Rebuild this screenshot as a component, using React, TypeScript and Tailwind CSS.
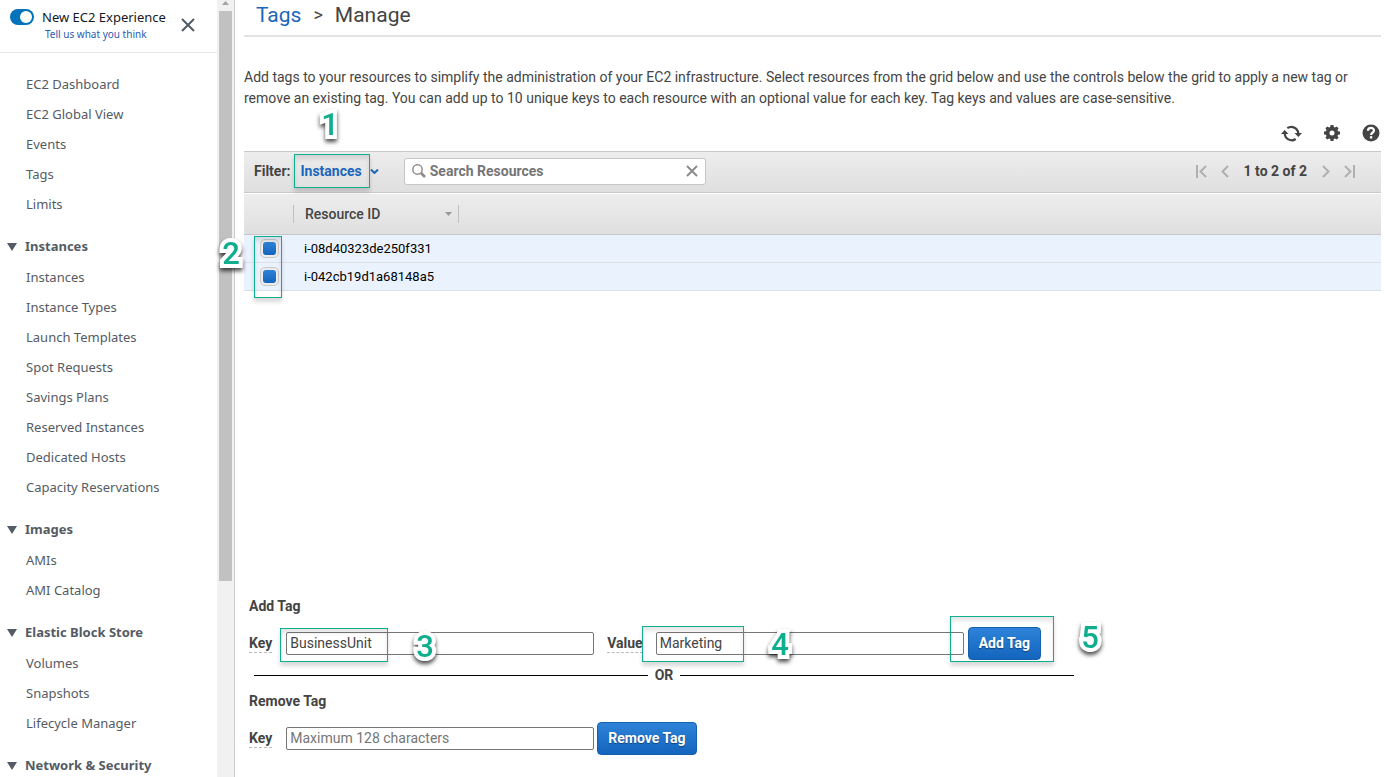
import React from "react";

type Section = { title: string; items: string[] };

const topLinks = ["EC2 Dashboard", "EC2 Global View", "Events", "Tags", "Limits"];

const sections: Section[] = [
  {
    title: "Instances",
    items: [
      "Instances",
      "Instance Types",
      "Launch Templates",
      "Spot Requests",
      "Savings Plans",
      "Reserved Instances",
      "Dedicated Hosts",
      "Capacity Reservations",
    ],
  },
  { title: "Images", items: ["AMIs", "AMI Catalog"] },
  { title: "Elastic Block Store", items: ["Volumes", "Snapshots", "Lifecycle Manager"] },
  { title: "Network & Security", items: [] },
];

const resources = ["i-08d40323de250f331", "i-042cb19d1a68148a5"];

function Frame({ className }: { className: string }) {
  return (
    <span
      aria-hidden="true"
      className={`pointer-events-none absolute z-10 border border-[#0fae8e] shadow-[0_4px_4px_rgba(0,0,0,0.15),inset_0_4px_4px_rgba(0,0,0,0.1)] ${className}`}
    />
  );
}

function Step({ n, className }: { n: number; className: string }) {
  return (
    <span
      className={`pointer-events-none absolute z-20 w-6 text-center text-[31px] leading-8 font-medium text-[#0fae8e] drop-shadow-[0_3px_2px_rgba(0,0,0,0.7)] [-webkit-text-stroke:8px_white] [paint-order:stroke_fill] [stroke-linejoin:round] ${className}`}
    >
      {n}
    </span>
  );
}

function NavLink({ label }: { label: string }) {
  return (
    <li className="flex h-[30px] items-center pl-[26px]">
      <a href="#" className="text-[#545b64]">
        {label}
      </a>
    </li>
  );
}

function Sidebar() {
  return (
    <aside className="flex w-[235px] shrink-0 border-r border-[#ccc] font-['Noto_Sans',sans-serif] text-[13px] text-[#545b64]">
      <div className="flex min-w-0 flex-1 flex-col">
        <div className="flex h-[53px] shrink-0 items-start border-b border-[#e3e8e8] pt-[8px] pl-[10px]">
          <label className="flex cursor-pointer items-start">
            <input type="checkbox" defaultChecked className="peer sr-only" aria-label="New EC2 Experience" />
            <span className="mt-[1px] flex h-4 w-6 justify-end rounded-full bg-[#0073bb] p-[2px]">
              <span className="size-3 rounded-full bg-white" />
            </span>
          </label>
          <div className="ml-2 flex w-[129px] flex-col whitespace-nowrap">
            <span className="text-[13px] leading-[18px] text-[#16191f]">New EC2 Experience</span>
            <a href="#" className="pl-[3px] text-[10px] leading-4 text-[#2a5db0]">
              Tell us what you think
            </a>
          </div>
          <button type="button" aria-label="Close" className="mt-[9px] ml-[9px]">
            <svg width="16" height="16" viewBox="0 0 16 16" stroke="#545b64" strokeWidth="2">
              <path d="M2 2 14 14M14 2 2 14" />
            </svg>
          </button>
        </div>
        <nav className="min-h-0 flex-1 overflow-hidden pt-4">
          <ul>
            {topLinks.map((l) => (
              <NavLink key={l} label={l} />
            ))}
          </ul>
          {sections.map((s) => (
            <section key={s.title}>
              <h2 className="mt-3 flex h-[31px] items-center gap-2 pl-[7px] font-bold">
                <svg width="10" height="8" viewBox="0 0 10 8" fill="#545b64">
                  <path d="M0 0h10L5 8z" />
                </svg>
                {s.title}
              </h2>
              <ul>
                {s.items.map((l) => (
                  <NavLink key={l} label={l} />
                ))}
              </ul>
            </section>
          ))}
        </nav>
      </div>
      <div className="flex w-[17px] flex-col items-center bg-[#f1f1f1]">
        <svg width="7" height="4" viewBox="0 0 7 4" fill="#a3a3a3" className="mt-[1px] mb-[6px] shrink-0">
          <path d="M0 4 3.500 0 7 4z" />
        </svg>
        <div className="h-[73.400%] w-[13px] bg-[#c1c1c1]" />
      </div>
    </aside>
  );
}

function Toolbar() {
  return (
    <div className="relative flex h-[42px] items-center border-y border-[#c8c8c8] bg-linear-to-b from-[#ededed] to-[#dfdfdf] pb-[2px] pl-[10px] font-bold">
      <Step n={1} className="-top-[43px] left-[74px]" />
      <span>Filter:</span>
      <button type="button" className="relative ml-[10px] flex items-center font-bold text-[#1b66bb]">
        Instances
        <svg width="9" height="5" viewBox="0 0 9 5" className="ml-2" fill="none" stroke="#1b66bb" strokeWidth="2">
          <path d="M1 0.500 4.500 4 8 0.500" />
        </svg>
        <Frame className="-top-[7px] -left-[6px] h-[34px] w-[76px]" />
      </button>
      <div className="ml-[25px] flex h-[27px] w-[302px] items-center rounded-[3px] border border-[#c6c6c6] bg-white px-[7px]">
        <svg width="14" height="14" viewBox="0 0 14 14" fill="none" stroke="#8c8c8c">
          <circle cx="5.500" cy="5.500" r="4.700" strokeWidth="1.500" />
          <path d="m9 9 4 4" strokeWidth="2.600" />
        </svg>
        <input
          aria-label="Search Resources"
          placeholder="Search Resources"
          className="ml-1 min-w-0 flex-1 font-bold outline-none placeholder:text-[#767676]"
        />
        <button type="button" aria-label="Clear search">
          <svg width="12" height="12" viewBox="0 0 12 12" stroke="#8c8c8c" strokeWidth="2">
            <path d="m1 1 10 10M11 1 1 11" />
          </svg>
        </button>
      </div>
      <div className="mr-[26px] ml-auto flex items-center">
        <button type="button" aria-label="First page">
          <svg width="11" height="13" viewBox="0 0 11 13" fill="none" stroke="#b0b0b0" strokeWidth="2">
            <path d="M1 0v13M10 1 4.500 6.500 10 12" />
          </svg>
        </button>
        <button type="button" aria-label="Previous page" className="ml-[14px]">
          <svg width="8" height="13" viewBox="0 0 8 13" fill="none" stroke="#b0b0b0" strokeWidth="2">
            <path d="M7 1 1.500 6.500 7 12" />
          </svg>
        </button>
        <span className="mx-[15px]">1 to 2 of 2</span>
        <button type="button" aria-label="Next page">
          <svg width="8" height="13" viewBox="0 0 8 13" fill="none" stroke="#b0b0b0" strokeWidth="2">
            <path d="m1 1 5.500 5.500L1 12" />
          </svg>
        </button>
        <button type="button" aria-label="Last page" className="ml-[14px]">
          <svg width="11" height="13" viewBox="0 0 11 13" fill="none" stroke="#b0b0b0" strokeWidth="2">
            <path d="M10 0v13M1 1l5.500 5.500L1 12" />
          </svg>
        </button>
      </div>
    </div>
  );
}

function ResourceTable() {
  return (
    <div className="relative border-t border-white">
      <table className="w-full table-fixed border-separate border-spacing-0 text-left">
        <colgroup>
          <col className="w-[49px]" />
          <col />
        </colgroup>
        <thead>
          <tr className="h-[41px] bg-linear-to-b from-[#ededed] to-[#dfdfdf]">
            <th aria-label="Selected" className="border-b border-[#c8c8c8] p-0" />
            <th className="border-b border-[#c8c8c8] p-0 font-medium">
              <div className="flex h-[18px] w-[166px] items-center justify-between border-x border-[#c0c0c0] pr-[6px] pl-[11px]">
                Resource ID
                <svg width="7" height="4" viewBox="0 0 7 4" fill="#9a9a9a">
                  <path d="M0 0h7L3.500 4z" />
                </svg>
              </div>
            </th>
          </tr>
        </thead>
        <tbody className="text-[13px] text-black">
          {resources.map((id) => (
            <tr key={id} className="h-7 bg-[#eaf2fe]">
              <td className="border-b border-[#dcdfe4] p-0">
                <label className="ml-4 flex size-[19px] items-center justify-center rounded-[5px] border border-[#c9c9c9] bg-[#ececec]">
                  <input
                    type="checkbox"
                    defaultChecked
                    aria-label={id}
                    className="size-[13px] appearance-none rounded-[3px] checked:bg-linear-to-b checked:from-[#2e83d8] checked:to-[#1464bd]"
                  />
                </label>
              </td>
              <td className="border-b border-[#dcdfe4] p-0 pt-[2px] pl-[11px]">{id}</td>
            </tr>
          ))}
        </tbody>
      </table>
      <Frame className="top-[42px] left-[10px] h-[62px] w-7" />
      <Step n={2} className="top-[44px] -left-[25px]" />
    </div>
  );
}

const fieldClass =
  "h-[23px] w-[308px] rounded-[2px] border border-[#767676] bg-white px-[3px] pb-[2px] text-[#444] outline-none placeholder:text-[#767676]";
const buttonClass =
  "h-[33px] rounded-[4px] border border-[#1560b0] bg-linear-to-b from-[#2e83d8] to-[#1264bd] px-[10px] pb-[2px] font-bold text-white [text-shadow:0_1px_1px_rgba(0,0,0,0.4)]";
const labelClass = "border-b border-dashed border-[#bbb] leading-[18px] font-bold";

function TagForms() {
  return (
    <div className="mt-auto flex flex-col pb-[22px] pl-[5px]">
      <h2 className="leading-5 font-bold">Add Tag</h2>
      <form className="relative mt-[11px] flex items-center">
        <label htmlFor="add-key" className={labelClass}>
          Key
        </label>
        <input id="add-key" defaultValue="BusinessUnit" className={`${fieldClass} ml-[14px]`} />
        <label htmlFor="add-value" className={`${labelClass} ml-[13px]`}>
          Value
        </label>
        <input id="add-value" defaultValue="Marketing" className={`${fieldClass} ml-[13px]`} />
        <button type="button" className={`${buttonClass} ml-1`}>
          Add Tag
        </button>
        <Frame className="top-[1px] left-[31px] h-[34px] w-[108px]" />
        <Step n={3} className="top-[4px] left-[164px]" />
        <Frame className="-top-[1px] left-[393px] h-9 w-[102px]" />
        <Step n={4} className="top-[2px] left-[519px]" />
        <Frame className="-top-[11px] left-[701px] h-[46px] w-[104px]" />
        <Step n={5} className="-top-[5px] left-[829px]" />
      </form>
      <div className="mt-[5px] ml-[5px] flex h-5 w-[820px] items-center gap-[7px] font-bold">
        <span className="h-px flex-1 bg-black" />
        OR
        <span className="h-px flex-1 bg-black" />
      </div>
      <h2 className="mt-[6px] leading-5 font-bold">Remove Tag</h2>
      <form className="mt-[11px] flex items-center">
        <label htmlFor="remove-key" className={labelClass}>
          Key
        </label>
        <input id="remove-key" placeholder="Maximum 128 characters" className={`${fieldClass} ml-[14px]`} />
        <button type="button" className={`${buttonClass} ml-[3px]`}>
          Remove Tag
        </button>
      </form>
    </div>
  );
}

export default function App() {
  return (
    <div className="flex h-screen overflow-hidden bg-white font-[Roboto,sans-serif] text-sm text-[#444]">
      <Sidebar />
      <main className="flex min-w-0 flex-1 flex-col pr-1 pl-[9px]">
        <h1 className="flex h-[37px] shrink-0 items-center border-b-2 border-[#e3e3e3] pb-[6px] pl-3 text-[21px]">
          <a href="#" className="text-[#1b66bb]">
            Tags
          </a>
          <span className="mx-3 text-[18px]">&gt;</span>
          Manage
        </h1>
        <p className="mt-[30px] leading-[21px]">
          Add tags to your resources to simplify the administration of your EC2 infrastructure. Select resources from the
          grid below and use the controls below the grid to apply a new tag or remove an existing tag. You can add up to 10
          unique keys to each resource with an optional value for each key. Tag keys and values are case-sensitive.
        </p>
        <div className="flex h-[42px] items-center justify-end gap-[22px] pt-[6px] pr-px text-[#444]">
          <button type="button" aria-label="Refresh">
            <svg width="21" height="18" viewBox="0 0 21 18" fill="none" stroke="#444" strokeWidth="2.200">
              <path d="M6.300 4.200A7 7 0 0 1 17.300 10M14.700 15A7 7 0 0 1 3.700 9" />
              <path d="M13.500 9H21L17.300 13zM0 10h7.500L3.700 6z" fill="#444" stroke="none" />
            </svg>
          </button>
          <button type="button" aria-label="Settings">
            <svg width="16" height="16" viewBox="0 0 16 16" fill="#444">
              <path
                fillRule="evenodd"
                d="M6.600 0h2.800l.4 2 1.200.5L12.700 1.400l1.900 1.900L13.500 5l.5 1.200 2 .4v2.800l-2 .4-.5 1.200 1.100 1.700-1.900 1.900L11 13.500l-1.200.5-.4 2H6.600l-.4-2L5 13.500l-1.700 1.100-1.900-1.900L2.500 11 2 9.800l-2-.4V6.600l2-.4L2.500 5 1.400 3.300l1.900-1.900L5 2.500 6.200 2zM8 5.500a2.500 2.500 0 1 0 0 5 2.500 2.500 0 0 0 0-5z"
              />
            </svg>
          </button>
          <button type="button" aria-label="Help">
            <svg width="18" height="18" viewBox="0 0 18 18">
              <circle cx="9" cy="9" r="8.500" fill="#444" />
              <path d="M6 6.800C6 3 12 3 12 6.500c0 2-2.900 2.200-2.900 4.400" fill="none" stroke="#fff" strokeWidth="2.200" />
              <path d="M7.900 12.200h2.400v2.300H7.900z" fill="#fff" />
            </svg>
          </button>
        </div>
        <Toolbar />
        <ResourceTable />
        <TagForms />
      </main>
    </div>
  );
}
